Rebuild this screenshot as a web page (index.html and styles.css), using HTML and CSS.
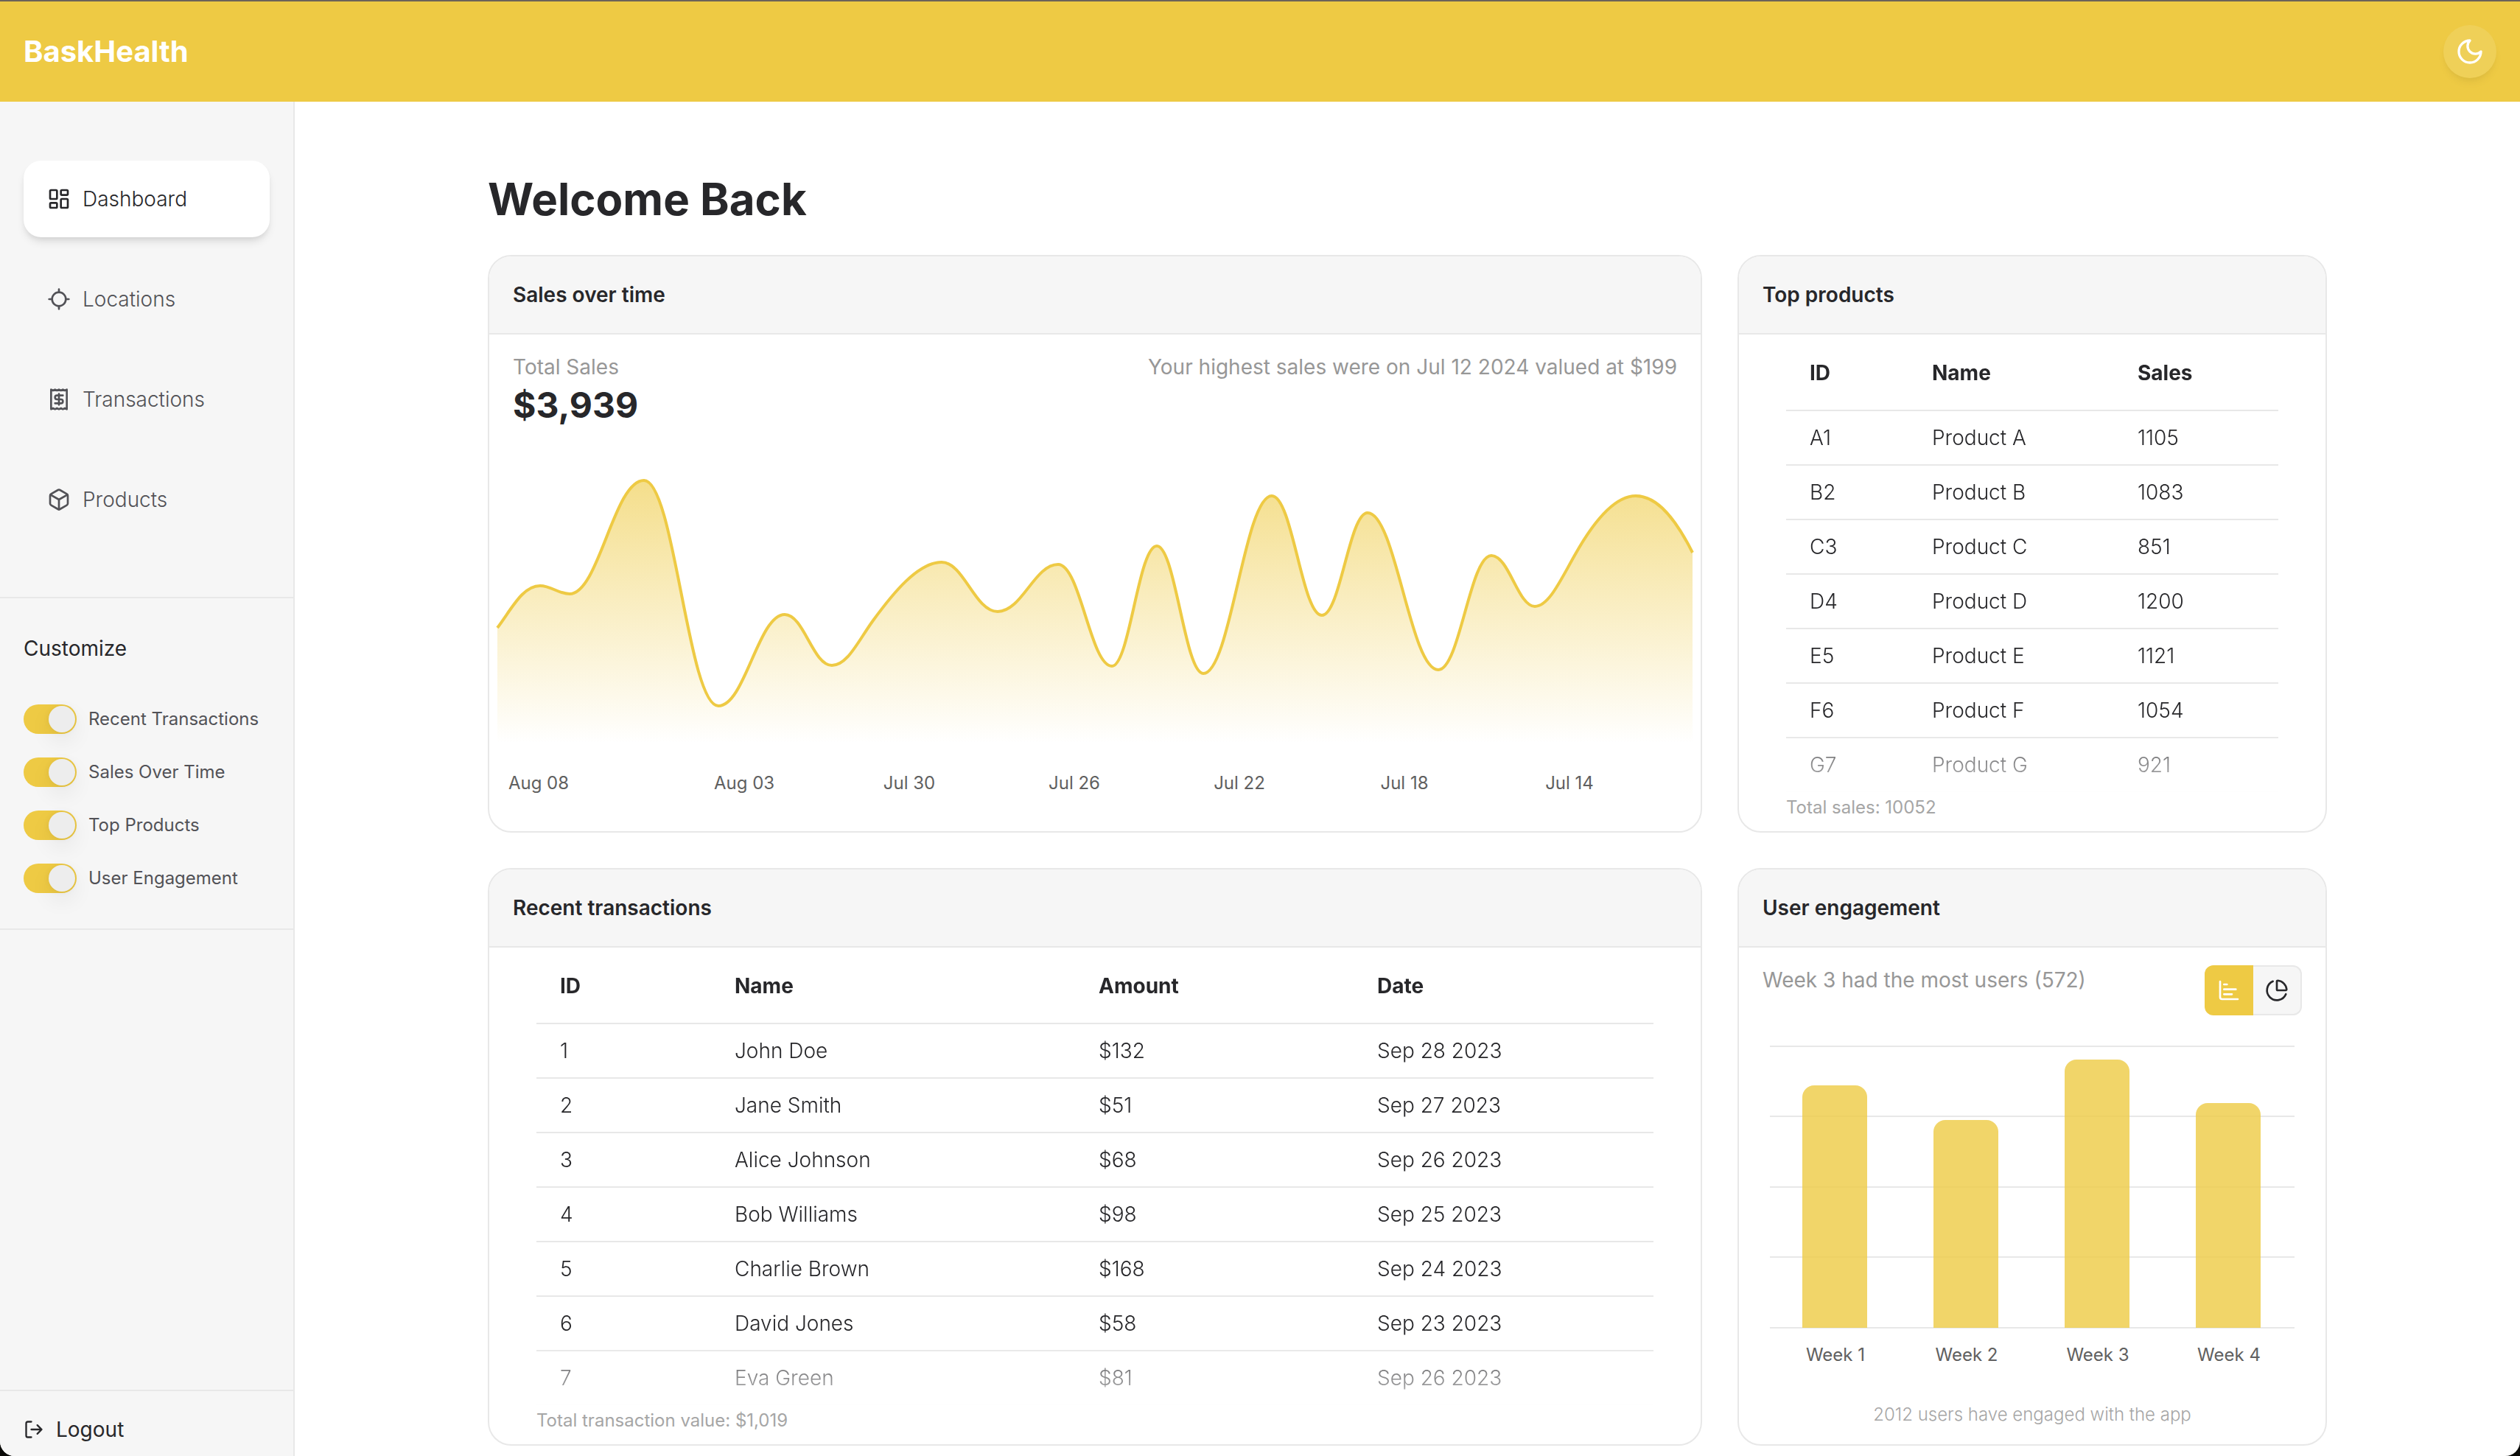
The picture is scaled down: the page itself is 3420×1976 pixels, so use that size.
FILE: index.html
```html
<!DOCTYPE html>
<html lang="en">
<head>
<meta charset="utf-8">
<title>BaskHealth</title>
<link rel="stylesheet" href="styles.css">
</head>
<body class="app">
<header class="topbar">
  <a class="brand" href="#">BaskHealth</a>
  <button class="theme-button" type="button" aria-label="Dark mode">
    <svg class="icon icon-lg" viewBox="0 0 24 24"><path d="M12 3a6 6 0 0 0 9 9 9 9 0 1 1-9-9Z"/></svg>
  </button>
</header>
<div class="shell">
  <aside class="sidebar">
    <nav class="nav">
      <a class="nav-item nav-item-active" href="#">
        <svg class="icon" viewBox="0 0 24 24"><rect x="3" y="3" width="7" height="9" rx="1"/><rect x="14" y="3" width="7" height="5" rx="1"/><rect x="14" y="12" width="7" height="9" rx="1"/><rect x="3" y="16" width="7" height="5" rx="1"/></svg>
        Dashboard
      </a>
      <a class="nav-item" href="#">
        <svg class="icon" viewBox="0 0 24 24"><path d="M2 12h3M19 12h3M12 2v3M12 19v3"/><circle cx="12" cy="12" r="7"/></svg>
        Locations
      </a>
      <a class="nav-item" href="#">
        <svg class="icon" viewBox="0 0 24 24"><path d="M4 2v20l2-1 2 1 2-1 2 1 2-1 2 1 2-1 2 1V2l-2 1-2-1-2 1-2-1-2 1-2-1-2 1Z"/><path d="M16 8h-6a2 2 0 1 0 0 4h4a2 2 0 1 1 0 4H8M12 17.500v-11"/></svg>
        Transactions
      </a>
      <a class="nav-item" href="#">
        <svg class="icon" viewBox="0 0 24 24"><path d="M21 8a2 2 0 0 0-1-1.730l-7-4a2 2 0 0 0-2 0l-7 4A2 2 0 0 0 3 8v8a2 2 0 0 0 1 1.730l7 4a2 2 0 0 0 2 0l7-4A2 2 0 0 0 21 16Z"/><path d="m3.300 7 8.700 5 8.700-5M12 22V12"/></svg>
        Products
      </a>
    </nav>
    <section class="customize">
      <h2 class="customize-title">Customize</h2>
      <div class="switches">
        <label class="switch"><input class="switch-input" type="checkbox" checked>Recent Transactions</label>
        <label class="switch"><input class="switch-input" type="checkbox" checked>Sales Over Time</label>
        <label class="switch"><input class="switch-input" type="checkbox" checked>Top Products</label>
        <label class="switch"><input class="switch-input" type="checkbox" checked>User Engagement</label>
      </div>
    </section>
    <button class="logout" type="button">
      <svg class="icon icon-sm" viewBox="0 0 24 24"><path d="M9 21H5a2 2 0 0 1-2-2V5a2 2 0 0 1 2-2h4M16 17l5-5-5-5M21 12H9"/></svg>
      Logout
    </button>
  </aside>
  <main class="main">
    <div class="content">
      <h1 class="page-title">Welcome Back</h1>
      <div class="cards">
        <section class="card card-wide">
          <h2 class="card-title">Sales over time</h2>
          <div class="summary">
            <div>
              <p class="muted">Total Sales</p>
              <p class="total">$3,939</p>
            </div>
            <p class="muted">Your highest sales were on Jul 12 2024 valued at $199</p>
          </div>
          <svg class="sales-chart" viewBox="664 582 1644 510" role="img" aria-label="Sales per day">
            <defs>
              <linearGradient id="sales-fill" x1="0" y1="0" x2="0" y2="1">
                <stop offset="0" stop-color="#eeca44" stop-opacity=".62"/>
                <stop offset="1" stop-color="#eeca44" stop-opacity="0"/>
              </linearGradient>
            </defs>
            <path fill="url(#sales-fill)" d="M675 852C694 827 709 795 733 795C748 795 758 806 773 806C813 806 833 652 874 652C915 652 934 958 975 958C1011 958 1029 834 1065 834C1091 834 1103 903 1129 903C1150 903 1164 871 1185 842C1212 805 1246 763 1278 763C1308 763 1323 830 1354 830C1387 830 1404 766 1436 766C1466 766 1480 904 1509 904C1533 904 1545 741 1570 741C1595 741 1608 914 1633 914C1670 914 1689 673 1726 673C1754 673 1767 835 1794 835C1819 835 1831 696 1856 696C1894 696 1914 909 1952 909C1981 909 1995 754 2024 754C2048 754 2060 823 2083 823C2102 823 2118 787 2138 752C2160 713 2190 673 2220 673C2250 673 2275 706 2297 750V1008H675Z"/>
            <path class="sales-line" d="M675 852C694 827 709 795 733 795C748 795 758 806 773 806C813 806 833 652 874 652C915 652 934 958 975 958C1011 958 1029 834 1065 834C1091 834 1103 903 1129 903C1150 903 1164 871 1185 842C1212 805 1246 763 1278 763C1308 763 1323 830 1354 830C1387 830 1404 766 1436 766C1466 766 1480 904 1509 904C1533 904 1545 741 1570 741C1595 741 1608 914 1633 914C1670 914 1689 673 1726 673C1754 673 1767 835 1794 835C1819 835 1831 696 1856 696C1894 696 1914 909 1952 909C1981 909 1995 754 2024 754C2048 754 2060 823 2083 823C2102 823 2118 787 2138 752C2160 713 2190 673 2220 673C2250 673 2275 706 2297 750"/>
            <g class="axis-label">
              <text x="731" y="1071">Aug 08</text>
              <text x="1010" y="1071">Aug 03</text>
              <text x="1234" y="1071">Jul 30</text>
              <text x="1458" y="1071">Jul 26</text>
              <text x="1682" y="1071">Jul 22</text>
              <text x="1906" y="1071">Jul 18</text>
              <text x="2130" y="1071">Jul 14</text>
            </g>
          </svg>
        </section>

        <section class="card">
          <h2 class="card-title">Top products</h2>
          <div class="table-view">
            <table class="table table-products">
              <colgroup><col class="col-id"><col class="col-name"><col></colgroup>
              <thead><tr><th>ID</th><th>Name</th><th>Sales</th></tr></thead>
              <tbody>
                <tr><td>A1</td><td>Product A</td><td>1105</td></tr>
                <tr><td>B2</td><td>Product B</td><td>1083</td></tr>
                <tr><td>C3</td><td>Product C</td><td>851</td></tr>
                <tr><td>D4</td><td>Product D</td><td>1200</td></tr>
                <tr><td>E5</td><td>Product E</td><td>1121</td></tr>
                <tr><td>F6</td><td>Product F</td><td>1054</td></tr>
                <tr><td>G7</td><td>Product G</td><td>921</td></tr>
              </tbody>
            </table>
          </div>
          <p class="note">Total sales: 10052</p>
        </section>

        <section class="card card-wide">
          <h2 class="card-title">Recent transactions</h2>
          <div class="table-view">
            <table class="table table-transactions">
              <colgroup><col class="col-id"><col class="col-name"><col class="col-amount"><col></colgroup>
              <thead><tr><th>ID</th><th>Name</th><th>Amount</th><th>Date</th></tr></thead>
              <tbody>
                <tr><td>1</td><td>John Doe</td><td>$132</td><td>Sep 28 2023</td></tr>
                <tr><td>2</td><td>Jane Smith</td><td>$51</td><td>Sep 27 2023</td></tr>
                <tr><td>3</td><td>Alice Johnson</td><td>$68</td><td>Sep 26 2023</td></tr>
                <tr><td>4</td><td>Bob Williams</td><td>$98</td><td>Sep 25 2023</td></tr>
                <tr><td>5</td><td>Charlie Brown</td><td>$168</td><td>Sep 24 2023</td></tr>
                <tr><td>6</td><td>David Jones</td><td>$58</td><td>Sep 23 2023</td></tr>
                <tr><td>7</td><td>Eva Green</td><td>$81</td><td>Sep 26 2023</td></tr>
              </tbody>
            </table>
          </div>
          <p class="note">Total transaction value: $1,019</p>
        </section>

        <section class="card">
          <h2 class="card-title">User engagement</h2>
          <div class="summary">
            <p class="muted">Week 3 had the most users (572)</p>
            <div class="segmented">
              <button class="segment segment-active" type="button" aria-label="Bar chart">
                <svg class="icon" viewBox="0 0 24 24"><path d="M3 3v16a2 2 0 0 0 2 2h16M7 16h8M7 11h12M7 6h3"/></svg>
              </button>
              <button class="segment" type="button" aria-label="Pie chart">
                <svg class="icon" viewBox="0 0 24 24"><path d="M21 12c.552 0 1.005-.449.950-.998a10 10 0 0 0-8.953-8.951c-.550-.055-.998.398-.998.950v8a1 1 0 0 0 1 1z"/><path d="M21.210 15.890A10 10 0 1 1 8 2.830"/></svg>
              </button>
            </div>
          </div>
          <svg class="bar-chart" viewBox="0 0 796 522" role="img" aria-label="Users per week">
            <path class="grid-line" d="M42 42H754M42 137H754M42 233H754M42 328H754M42 424H754"/>
            <g class="bar">
              <path d="M86 424V111a16 16 0 0 1 16-16h56a16 16 0 0 1 16 16V424Z"/>
              <path d="M264 424V158a16 16 0 0 1 16-16h56a16 16 0 0 1 16 16V424Z"/>
              <path d="M442 424V76a16 16 0 0 1 16-16h56a16 16 0 0 1 16 16V424Z"/>
              <path d="M620 424V135a16 16 0 0 1 16-16h56a16 16 0 0 1 16 16V424Z"/>
            </g>
            <g class="axis-label">
              <text x="131" y="469">Week 1</text>
              <text x="309" y="469">Week 2</text>
              <text x="487" y="469">Week 3</text>
              <text x="665" y="469">Week 4</text>
            </g>
          </svg>
          <p class="note note-center">2012 users have engaged with the app</p>
        </section>
      </div>
    </div>
  </main>
</div>
</body>
</html>
```
FILE: styles.css
```css
:root {
  --accent: #eeca44;
  --panel: #f6f6f6;
  --line: #e8e8e8;
  --text: #27272a;
  --text-soft: #525257;
  --muted: #979797;
}

* {
  box-sizing: border-box;
}

html {
  background: #0a0a08;
}

.app {
  display: flex;
  flex-direction: column;
  height: 100vh;
  margin: 0;
  overflow: hidden;
  border-radius: 0 0 20px 20px;
  background: #fff;
  color: var(--text);
  font-family: Inter, "Liberation Sans", sans-serif;
  font-size: 28px;
  line-height: 40px;
}

h1, h2, p {
  margin: 0;
}

button {
  padding: 0;
  border: 0;
  color: inherit;
  font: inherit;
}

.icon {
  flex: none;
  width: 32px;
  height: 32px;
  fill: none;
  stroke: currentColor;
  stroke-width: 2;
  stroke-linecap: round;
  stroke-linejoin: round;
}

.icon-sm {
  width: 28px;
  height: 28px;
}

.icon-lg {
  width: 40px;
  height: 40px;
}

/* Top bar */

.topbar {
  display: flex;
  flex: none;
  align-items: center;
  justify-content: space-between;
  padding: 32px;
  border-top: 2px solid #6b6359;
  background: var(--accent);
}

.brand {
  color: #fff;
  font-size: 40px;
  font-weight: 700;
  text-decoration: none;
}

.theme-button {
  display: flex;
  align-items: center;
  justify-content: center;
  width: 72px;
  height: 72px;
  border-radius: 50%;
  background: #efd058;
  box-shadow: 0 8px 12px -2px rgb(0 0 0 / 5%), 0 4px 8px -4px rgb(0 0 0 / 5%);
  color: #fff;
}

.shell {
  display: flex;
  flex: 1;
  min-height: 0;
}

/* Sidebar */

.sidebar {
  display: flex;
  flex: none;
  flex-direction: column;
  width: 400px;
  border-right: 2px solid var(--line);
  background: var(--panel);
}

.nav {
  display: flex;
  flex-direction: column;
  gap: 32px;
  padding: 80px 32px;
}

.nav-item {
  display: flex;
  align-items: center;
  gap: 16px;
  padding: 32px;
  border-radius: 24px;
  color: var(--text-soft);
  font-weight: 300;
  text-decoration: none;
}

.nav-item-active {
  background: #fff;
  box-shadow: 0 8px 12px -2px rgb(0 0 0 / 10%), 0 4px 8px -4px rgb(0 0 0 / 10%);
  color: var(--text);
}

.customize {
  display: flex;
  flex-direction: column;
  gap: 56px;
  padding: 48px 32px;
  border-top: 2px solid var(--line);
  border-bottom: 2px solid var(--line);
}

.customize-title {
  font-size: 28px;
  font-weight: 400;
}

.switches {
  display: flex;
  flex-direction: column;
  gap: 32px;
}

.switch {
  display: flex;
  align-items: center;
  gap: 16px;
  color: var(--text-soft);
  font-size: 24px;
}

.switch-input {
  display: flex;
  width: 72px;
  height: 40px;
  margin: 0;
  padding: 2px;
  border-radius: 20px;
  background: #d4d4d8;
  appearance: none;
}

.switch-input::before {
  width: 36px;
  height: 36px;
  border-radius: 50%;
  background: #ededed;
  box-shadow: 0 0 10px rgb(0 0 0 / 5%), 0 12px 30px rgb(0 0 0 / 7%);
  content: "";
}

.switch-input:checked {
  justify-content: flex-end;
  background: var(--accent);
}

.logout {
  display: flex;
  align-items: center;
  gap: 16px;
  margin-top: auto;
  padding: 32px 32px 16px;
  border-top: 2px solid var(--line);
  background: none;
}

/* Content */

.main {
  flex: 1;
  min-width: 0;
  padding: 96px 48px 0;
}

.content {
  max-width: 2496px;
  margin: 0 auto;
}

.page-title {
  margin-bottom: 40px;
  font-size: 60px;
  font-weight: 700;
  line-height: 72px;
}

.cards {
  display: grid;
  grid-template-columns: repeat(3, minmax(0, 1fr));
  gap: 48px;
}

.card {
  display: flex;
  flex-direction: column;
  min-height: 784px;
  overflow: hidden;
  border: 2px solid var(--line);
  border-radius: 32px;
}

.card-wide {
  grid-column: span 2;
}

.card-title {
  padding: 32px;
  border-bottom: 2px solid var(--line);
  background: var(--panel);
  font-size: 28px;
  font-weight: 600;
}

.summary {
  display: flex;
  justify-content: space-between;
  padding: 24px 32px 0;
}

.muted {
  color: var(--muted);
}

.total {
  font-size: 48px;
  font-weight: 700;
  line-height: 64px;
}

.sales-chart,
.bar-chart {
  display: block;
  width: 100%;
}

.sales-line {
  fill: none;
  stroke: var(--accent);
  stroke-width: 4;
}

.axis-label {
  fill: #606060;
  font-size: 24px;
  text-anchor: middle;
}

.grid-line {
  stroke: var(--line);
  stroke-width: 2;
}

.bar {
  fill: var(--accent);
  fill-opacity: .8;
}

/* Tables */

.table-view {
  padding: 0 64px;
  mask-image: linear-gradient(to top, transparent, rgb(0 0 0 / 45%) 26px, rgb(0 0 0 / 60%) 50px, #000 78px);
}

.table {
  width: 100%;
  border-spacing: 0;
  table-layout: fixed;
  font-weight: 300;
  text-align: left;
}

.table th {
  padding: 32px 32px 30px;
  border-bottom: 2px solid var(--line);
  font-weight: 700;
}

.table td {
  padding: 16px 32px;
  border-bottom: 2px solid var(--line);
}

.table-products .col-id {
  width: 166px;
}

.table-products .col-name {
  width: 279px;
}

.table-transactions .col-id {
  width: 237px;
}

.table-transactions .col-name {
  width: 494px;
}

.table-transactions .col-amount {
  width: 378px;
}

.note {
  padding: 0 64px;
  color: #a6a6a6;
  font-size: 24px;
}

.note-center {
  font-weight: 300;
  text-align: center;
}

/* Chart switch */

.segmented {
  display: flex;
}

.segment {
  display: flex;
  align-items: center;
  justify-content: center;
  width: 66px;
  height: 68px;
  border: 2px solid var(--line);
  border-left: 0;
  border-radius: 0 12px 12px 0;
  background: var(--panel);
}

.segment-active {
  border: 0;
  border-radius: 12px 0 0 12px;
  background: var(--accent);
  color: #fff;
}
```
